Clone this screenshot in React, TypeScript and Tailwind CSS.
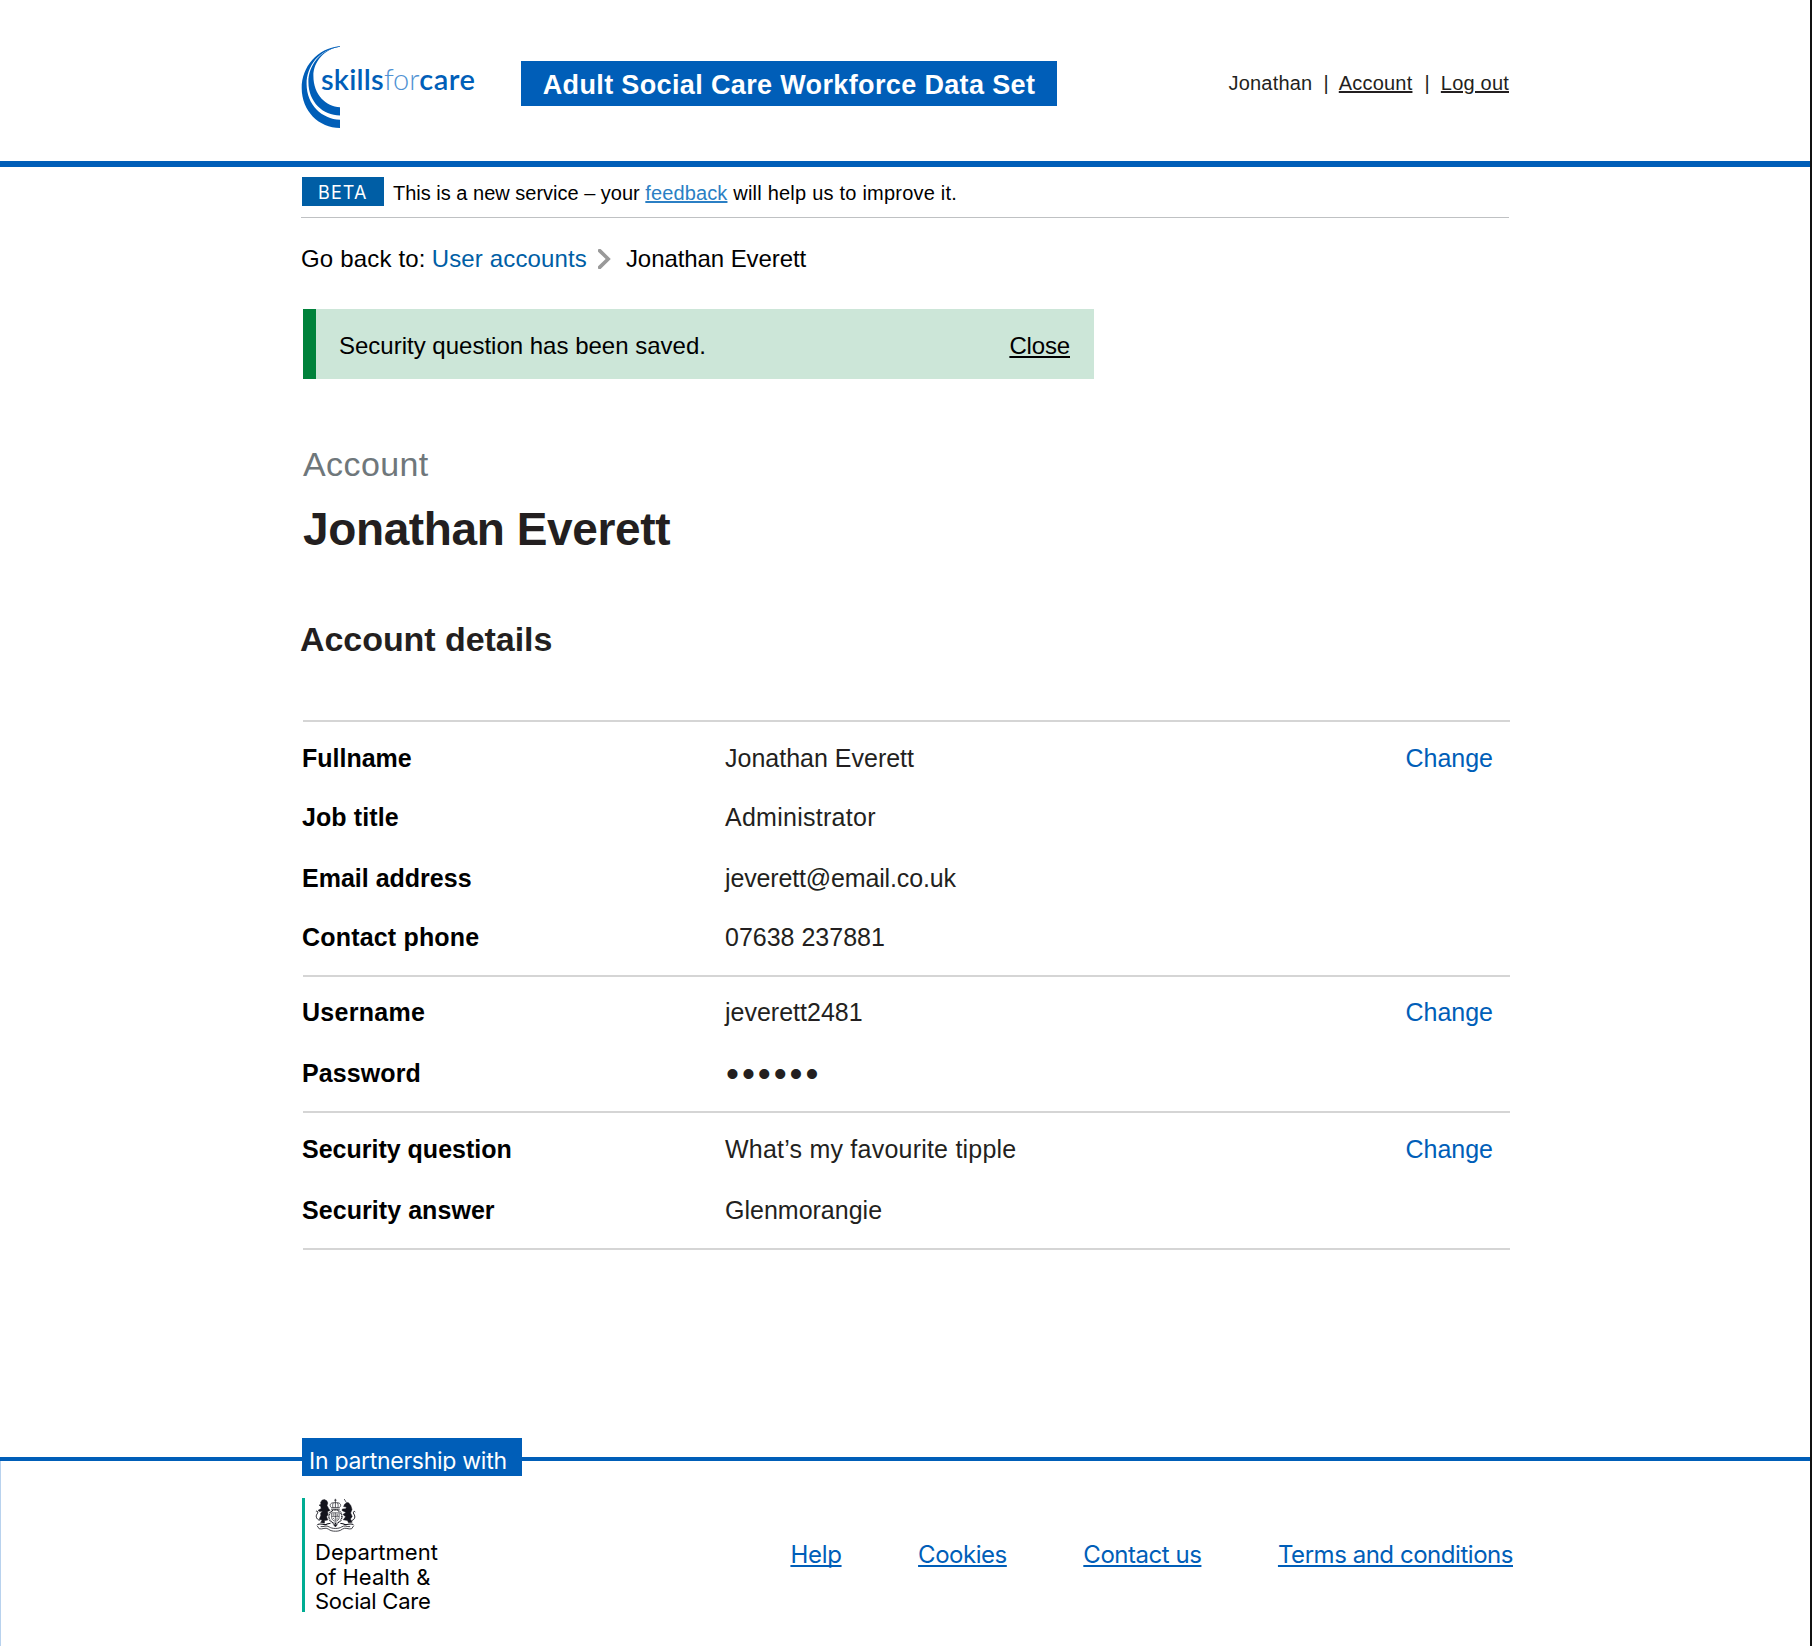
import { ReactNode } from "react";

type Row = { label: string; value: ReactNode; height: string; labelClass?: string; valueClass?: string };
type Group = { pad: string; rows: Row[] };

const groups: Group[] = [
  {
    pad: "pt-[21px]",
    rows: [
      { label: "Fullname", value: "Jonathan Everett", height: "h-[59px]" },
      {
        label: "Job title",
        value: "Administrator",
        height: "h-[61px]",
        labelClass: "tracking-[0.1px]",
        valueClass: "tracking-[0.27px]",
      },
      { label: "Email address", value: "jeverett@email.co.uk", height: "h-[59px]", valueClass: "tracking-[-0.15px]" },
      { label: "Contact phone", value: "07638 237881", height: "h-[53px]", labelClass: "tracking-[0.18px]" },
    ],
  },
  {
    pad: "pt-5",
    rows: [
      { label: "Username", value: "jeverett2481", height: "h-[61px]", labelClass: "tracking-[0.28px]" },
      {
        label: "Password",
        value: <span className="block pl-px pt-px text-[37px] leading-[30px] tracking-[2.95px]">••••••</span>,
        height: "h-[53px]",
        labelClass: "tracking-[0.1px]",
      },
    ],
  },
  {
    pad: "pt-[21px]",
    rows: [
      { label: "Security question", value: "What’s my favourite tipple", height: "h-[61px]", valueClass: "tracking-[0.22px]" },
      { label: "Security answer", value: "Glenmorangie", height: "h-[53px]", labelClass: "tracking-[0.06px]" },
    ],
  },
];

function Logo() {
  return (
    <div className="mt-[45px] flex h-[84px] w-[220px] text-[#005eb8]">
      <svg viewBox="0 0 40 84" className="h-[84px] w-10 shrink-0" fill="currentColor">
        <path d="M40 1.2C17 3 1.7 22 1.7 43C1.7 66 19 83 40 83V74.8C22 74 6.6 60 6.6 39C6.6 21 19 4.5 40 1.8Z" />
        <path d="M40 1.3C20 4.5 8.4 21 8.4 37C8.4 57 23 70.4 40 70.5V62.2C26 61.5 13.4 50 13.4 31C13.4 17 24 4 40 1.8Z" />
      </svg>
      <div className="-ml-[19px] mt-[19px] whitespace-nowrap font-['Lato',sans-serif] text-[29px] leading-[30px]">
        <span className="font-semibold tracking-[0.2px]">skills</span>
        <span className="font-light tracking-[-0.1px] text-[#4f92d3]">for</span>
        <span className="font-semibold tracking-[0.5px]">care</span>
      </div>
    </div>
  );
}

function Crest() {
  return (
    <svg viewBox="0 0 41 34" className="h-[34px] w-[41px]" fill="none" stroke="#14141c" strokeLinejoin="round">
      {/* lion */}
      <path fill="#14141c" strokeWidth=".5" d="M5.6 4.4L7 2.2L9.4 1.6L11.8 2.8L12.8 5L12 7.4L13.6 10.4L15 12.4L12.6 13.4L13 16.4L11.6 18.8L12.8 22L9.6 22.6L9.4 25.2L5.6 24.6L7.2 22L4.2 21.4L5.8 17.6L5.6 15.4L7.4 13L4.6 13.6L3 12.4L6.2 10.4L5.6 8L4 7.2L6 6.2Z" />
      <path strokeWidth="1" d="M4.6 22.4C1.2 21 .4 18 2.2 15.8C3.6 14 2 12.2 .9 13.6" />
      {/* unicorn */}
      <path fill="#14141c" strokeWidth=".5" d="M32 4.6L33.6 4.8L35.8 7.6L37 11.4L35.6 15L37.2 18.4L35.4 21L37.2 24.2L33.6 24.8L32.4 22.4L28.2 21.8L30.6 18.8L28 16.4L31 14.6L27 12.4L27.4 11L30.8 10.8L31.4 9L28.6 8.6L29.6 6.2Z" />
      <path strokeWidth=".7" d="M31.4 4.6L29.2 1" />
      <path strokeWidth="1" d="M36.6 22.6C40 21.6 40.6 18.4 38.8 16C37.6 14 39.4 12.4 40.2 14.2" />
      {/* crown */}
      <path strokeWidth=".7" d="M16.4 9.6C13.4 6.8 16.2 4 20.4 4.8C24.6 4 27.4 6.8 24.4 9.6ZM20.4 .8V9.4M19.2 2.2H21.6M18.2 5C17.4 7 17.6 8.4 18 9.4M22.6 5C23.4 7 23.2 8.4 22.8 9.4" />
      <path strokeWidth=".8" d="M16 11.2H24.8" />
      {/* garter and shield */}
      <ellipse cx="20.4" cy="18.6" rx="6.5" ry="6.7" strokeWidth="1.4" strokeDasharray="1 .6" />
      <path strokeWidth=".6" d="M16.6 14.8H24.2V19.4C24.2 21.8 22.4 22.8 20.4 23.4C18.4 22.8 16.6 21.8 16.6 19.4ZM20.4 14.8V23M16.8 18.6H24M17.6 16H19.4M17.6 17.2H19.4M21.4 16.2H23.2M21.4 17.4H23.2M18 20L19.4 21.4M21.4 20.2H22.8M21.4 21.4H22.4" />
      {/* compartment and motto scroll */}
      <path strokeWidth="1.1" d="M2.4 26.6C5.4 24.8 8.4 27.4 11.4 26.4C13.4 25.8 13.8 25 15.4 25.6M38.4 26.6C35.4 24.8 32.4 27.4 29.4 26.4C27.4 25.8 27 25 25.4 25.6" />
      <path strokeWidth=".8" d="M2 27.6L4.2 30.8C7.4 31.6 10.6 29 13.2 31C15.8 33 18 33.2 20.4 33.2C22.8 33.2 25 33 27.6 31C30.2 29 33.4 31.6 36.6 30.8L38.8 27.6M5.6 28.6C9 29 11.4 27 14 28.8C17 31 23.8 31 26.8 28.8C29.4 27 31.8 29 35.2 28.6" />
      <path fill="#14141c" strokeWidth=".5" d="M18.4 26.6L20.4 29L22.4 26.6Z" />
    </svg>
  );
}

export default function App() {
  return (
    <div className="relative flex h-[1646px] w-[1812px] flex-col overflow-hidden border-r-2 border-[#111] bg-white font-['Liberation_Sans',Arial,sans-serif] text-black">
      <header className="h-[167px] shrink-0 border-b-6 border-[#005eb8]">
        <div className="ml-[300px] flex w-[1209px] items-start">
          <Logo />
          <div className="ml-px mt-[61px] flex h-[45px] w-[536px] items-center justify-center whitespace-nowrap bg-[#005eb8] pt-1 text-[27px] font-bold leading-[41px] tracking-[0.36px] text-white">
            Adult Social Care Workforce Data Set
          </div>
          <nav className="ml-auto mt-[69px] flex gap-[11px] whitespace-nowrap text-[20px] leading-7 tracking-[0.2px] text-[#231f20]">
            <span>Jonathan</span>
            <span>|</span>
            <a className="-ml-px mr-px underline decoration-2 underline-offset-1">Account</a>
            <span>|</span>
            <a className="underline decoration-2 underline-offset-1">Log out</a>
          </nav>
        </div>
      </header>

      <main className="ml-[301px] w-[1209px] shrink-0">
        <div className="flex h-[51px] w-[1208px] items-start border-b border-[#bfc1c3] pt-2.5">
          <span className="ml-px h-[29px] w-[82px] bg-[#005ea5] pl-4 pt-px font-['Inter',sans-serif] text-[18px] leading-[30px] tracking-[1.1px] text-white">
            BETA
          </span>
          <p className="ml-[9px] mt-0.5 whitespace-nowrap text-[20px] leading-[29px]">
            This is a new service – your{" "}
            <a className="tracking-[0.12px] text-[#2b7fc4] underline decoration-2 underline-offset-1">feedback</a>
            <span className="tracking-[0.22px]"> will help us to improve it.</span>
          </p>
        </div>

        <nav className="mt-[26px] flex items-center whitespace-nowrap text-[24px] leading-[30px]">
          <span className="tracking-[0.18px]">Go back to:</span>
          <a className="ml-1.5 tracking-[0.14px] text-[#005ea5]">User accounts</a>
          <svg viewBox="0 0 13 20" className="-mt-px ml-[11px] h-5 w-[13px]" fill="none" stroke="#999" strokeWidth="3.6">
            <path d="M1.6 1.6L10.2 10L1.6 18.4" strokeLinecap="round" />
          </svg>
          <span className="ml-[15px] tracking-[-0.08px]">Jonathan Everett</span>
        </nav>

        <div className="ml-0.5 mt-[35px] flex h-[70px] w-[791px] items-center justify-between border-l-[13px] border-[#00823b] bg-[#cce6d8] pl-[23px] pr-6 pt-[3px] text-[24px] leading-[30px]">
          <span>Security question has been saved.</span>
          <a className="tracking-[-0.15px] underline decoration-2 underline-offset-2">Close</a>
        </div>

        <p className="ml-0.5 mt-[65px] text-[34px] leading-10 tracking-[0.4px] text-[#6f777b]">Account</p>
        <h1 className="ml-0.5 mt-[17px] text-[46px] font-bold leading-[56px] tracking-[-0.38px] text-[#231f20]">Jonathan Everett</h1>
        <h2 className="-ml-px mt-[62px] text-[34px] font-bold leading-10 tracking-[-0.06px] text-[#231f20]">Account details</h2>

        <div className="mt-[61px] text-[25px] leading-[30px]">
          {groups.map((g, i) => (
            <section key={i}>
              <div className="ml-0.5 h-0.5 bg-[#d5d5d5]" />
              <dl className={g.pad}>
                {g.rows.map((r, j) => (
                  <div key={r.label} className={`flex items-start pl-px ${r.height}`}>
                    <dt className={`w-[423px] font-bold ${r.labelClass ?? ""}`}>{r.label}</dt>
                    <dd className={`text-[#231f20] ${r.valueClass ?? ""}`}>{r.value}</dd>
                    {j === 0 && <a className="ml-auto mr-[17px] text-[#005eb8]">Change</a>}
                  </div>
                ))}
              </dl>
            </section>
          ))}
          <div className="ml-0.5 h-0.5 bg-[#d5d5d5]" />
        </div>
      </main>

      <footer className="mt-[188px] flex-1 font-['Inter',sans-serif]">
        <div className="flex h-[38px] items-center">
          <div className="mt-1 h-1 w-[302px] bg-[#005eb8]" />
          <div className="h-[38px] w-[220px] bg-[#005eb8]">
            <div className="h-[33px] overflow-hidden whitespace-nowrap pl-[7px] pt-2 text-[23px] leading-[30px] tracking-[-0.28px] text-white">
              In partnership with
            </div>
          </div>
          <div className="mt-1 h-1 flex-1 bg-[#005eb8]" />
        </div>
        <div className="ml-[302px] mt-[22px] flex w-[1211px] items-start">
          <div className="h-[114px] border-l-3 border-[#00ad93] pl-[10px]">
            <Crest />
            <p className="mt-2 whitespace-nowrap text-[22px] leading-[24.5px]">
              Department
              <br />
              of Health &amp;
              <br />
              <span className="tracking-[-0.25px]">Social Care</span>
            </p>
          </div>
          <div className="ml-auto mt-[42px] flex gap-[76.5px] whitespace-nowrap text-[24px] leading-[30px] tracking-[-0.46px] text-[#005eb8] [&>a]:underline [&>a]:decoration-2 [&>a]:underline-offset-2 [&>a]:[text-decoration-skip-ink:none]">
            <a className="tracking-[-0.3px]">Help</a>
            <a>Cookies</a>
            <a>Contact us</a>
            <a>Terms and conditions</a>
          </div>
        </div>
      </footer>
      <div className="absolute bottom-0 left-0 h-[185px] w-px bg-[#b8d2ee]" />
    </div>
  );
}
